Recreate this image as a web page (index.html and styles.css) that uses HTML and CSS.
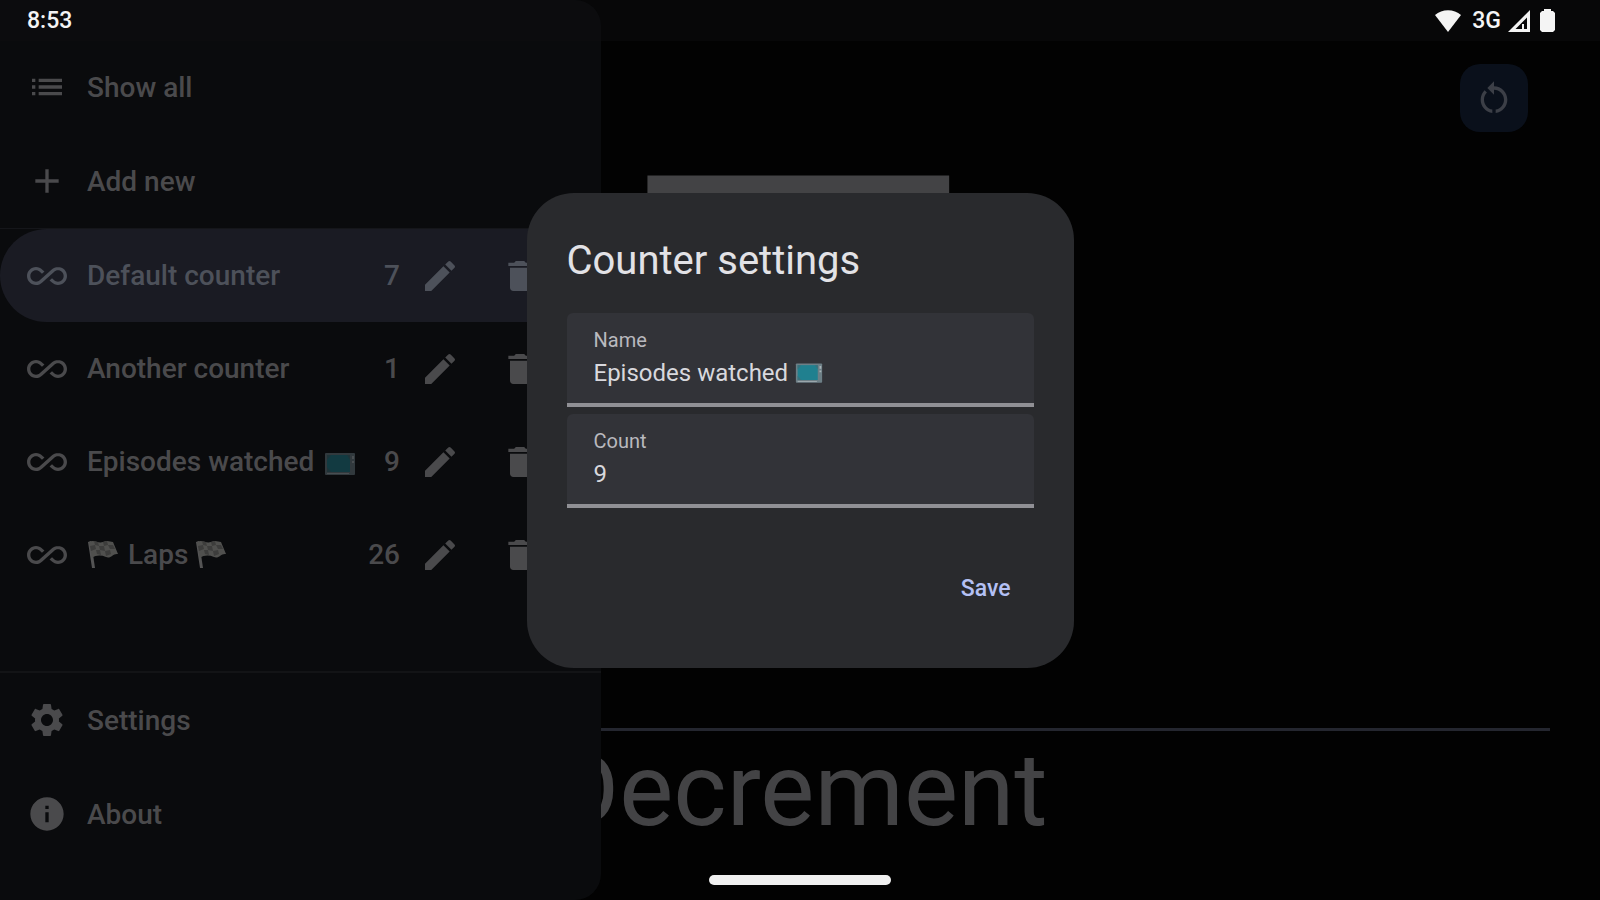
FILE: index.html
```html
<!DOCTYPE html>
<html lang="en">
<head>
<meta charset="UTF-8" />
<meta name="viewport" content="width=device-width, initial-scale=1" />
<title>Counter</title>
<link rel="stylesheet" href="styles.css">
</head>
<body>
  <!-- shared icons -->
  <svg class="sprite" aria-hidden="true">
    <symbol id="i-loop" viewBox="0 0 24 24"><path d="M18.6 6.62c-1.44 0-2.8.56-3.77 1.53L12 10.66 10.48 12h.01L7.8 14.39c-.64.64-1.49.99-2.4.99-1.87 0-3.39-1.51-3.39-3.38S3.53 8.62 5.4 8.62c.91 0 1.76.35 2.44 1.03l1.13 1 1.51-1.34L9.22 8.2C8.2 7.18 6.84 6.62 5.4 6.62 2.42 6.62 0 9.04 0 12s2.42 5.38 5.4 5.38c1.44 0 2.8-.56 3.77-1.53l2.83-2.5.01.01L13.52 12h-.01l2.69-2.39c.64-.64 1.49-.99 2.4-.99 1.87 0 3.39 1.51 3.39 3.38s-1.52 3.38-3.39 3.38c-.9 0-1.76-.35-2.44-1.03l-1.14-1.01-1.51 1.34 1.27 1.12c1.02 1.01 2.37 1.57 3.82 1.57 2.98 0 5.4-2.41 5.4-5.38s-2.42-5.37-5.4-5.37z"/></symbol>
    <symbol id="i-edit" viewBox="0 0 24 24"><path d="M3 17.25V21h3.75L17.81 9.94l-3.75-3.75L3 17.25zM20.71 7.04a1 1 0 0 0 0-1.41l-2.34-2.34a1 1 0 0 0-1.41 0l-1.83 1.83 3.75 3.75 1.83-1.83z"/></symbol>
    <symbol id="i-delete" viewBox="0 0 24 24"><path d="M6 19c0 1.1.9 2 2 2h8c1.1 0 2-.9 2-2V7H6v12zM19 4h-3.5l-1-1h-5l-1 1H5v2h14V4z"/></symbol>
    <symbol id="i-tv" viewBox="0 0 32 26">
      <rect x="1" y="2" width="30" height="22" rx="1" fill="#6d7f86"/>
      <rect x="3" y="4" width="23" height="17" fill="#20808f"/>
      <path d="M3 4h4L3 9zM26 4v5l-3-5zM3 21v-5l4 5z" fill="#3c6f7a"/>
      <path d="M3 22h22v1H3zM28 5h2v3h-2zM28 10h2v2h-2z" fill="#a9b4b8"/>
    </symbol>
    <symbol id="i-flag" viewBox="0 0 32 30">
      <path d="M1 2l3-1 4 27H5z" fill="#545454"/>
      <path d="M2 2c5-3 9 2 14 0s7 0 10 0l5 12c-5-1-7 5-12 3S9 15 5 18z" fill="#50504e"/>
      <path d="M7 1l4 1 1 4-4-1zM16 2l4-1 1 4-4 1zM3 6l5-1 1 4-5 2zM12 6l5 0 1 5-5-1zM21 5l5 0 2 4-5 0zM9 10l4 0 1 5-4-1zM18 11l5-1 1 4-5 2z" fill="#3d3d3c"/>
    </symbol>
  </svg>

  <header class="status-bar">
    <span>8:53</span>
    <div class="status-icons">
      <svg class="wifi" viewBox="0 0 26 22"><path d="M0 5C7-1.500 19-1.500 26 5L13 22z"/></svg>
      <span>3G</span>
      <svg class="signal" viewBox="0 0 22 22"><path fill-rule="evenodd" d="M22 0v22H0zM19 7.500L7.500 19H19z"/><path d="M14 14h2v5h-2z"/></svg>
      <svg class="battery" viewBox="0 0 15 23"><path d="M4 2V0h7v2h2l2 2v17l-2 2H2l-2-2V4l2-2z"/></svg>
    </div>
  </header>

  <main class="counter">
    <div class="count">7</div>
    <button class="decrement">Decrement</button>
    <button class="reset" aria-label="Reset">
      <svg class="icon" viewBox="0 0 24 24"><path d="M12 5V2L8 6l4 4V7c3.310 0 6 2.690 6 6 0 2.970-2.170 5.430-5 5.910v2.020c3.950-.49 7-3.850 7-7.930 0-4.420-3.580-8-8-8zM6 13c0-1.650.67-3.150 1.760-4.240L6.340 7.340C4.900 8.790 4 10.790 4 13c0 4.080 3.050 7.440 7 7.930v-2.020c-2.830-.48-5-2.940-5-5.910z"/></svg>
    </button>
  </main>

  <nav class="drawer">
    <a class="row" href="#">
      <svg class="icon" viewBox="0 0 24 24"><path d="M3 13h2v-2H3v2zm0 4h2v-2H3v2zm0-8h2V7H3v2zm4 4h14v-2H7v2zm0 4h14v-2H7v2zM7 7v2h14V7H7z"/></svg>
      <span class="label">Show all</span>
    </a>
    <a class="row" href="#">
      <svg class="icon" viewBox="0 0 24 24"><path d="M19 13h-6v6h-2v-6H5v-2h6V5h2v6h6v2z"/></svg>
      <span class="label">Add new</span>
    </a>

    <div class="counters">
      <div class="row selected">
        <svg class="icon"><use href="#i-loop"/></svg>
        <a class="label" href="#">Default counter</a>
        <span>7</span>
        <button aria-label="Edit"><svg class="icon"><use href="#i-edit"/></svg></button>
        <button aria-label="Delete"><svg class="icon"><use href="#i-delete"/></svg></button>
      </div>
      <div class="row">
        <svg class="icon"><use href="#i-loop"/></svg>
        <a class="label" href="#">Another counter</a>
        <span>1</span>
        <button aria-label="Edit"><svg class="icon"><use href="#i-edit"/></svg></button>
        <button aria-label="Delete"><svg class="icon"><use href="#i-delete"/></svg></button>
      </div>
      <div class="row">
        <svg class="icon"><use href="#i-loop"/></svg>
        <a class="label" href="#">Episodes watched <svg class="emoji tv"><use href="#i-tv"/></svg></a>
        <span>9</span>
        <button aria-label="Edit"><svg class="icon"><use href="#i-edit"/></svg></button>
        <button aria-label="Delete"><svg class="icon"><use href="#i-delete"/></svg></button>
      </div>
      <div class="row">
        <svg class="icon"><use href="#i-loop"/></svg>
        <a class="label" href="#"><svg class="emoji"><use href="#i-flag"/></svg> Laps <svg class="emoji"><use href="#i-flag"/></svg></a>
        <span>26</span>
        <button aria-label="Edit"><svg class="icon"><use href="#i-edit"/></svg></button>
        <button aria-label="Delete"><svg class="icon"><use href="#i-delete"/></svg></button>
      </div>
    </div>

    <div class="drawer-footer">
      <a class="row" href="#">
        <svg class="icon" viewBox="0 0 24 24"><path d="M19.140 12.940c.04-.3.060-.61.060-.94 0-.32-.02-.64-.07-.94l2.030-1.580c.18-.14.230-.41.120-.61l-1.920-3.320c-.12-.22-.37-.29-.59-.22l-2.390.96c-.5-.38-1.030-.7-1.620-.94l-.36-2.540c-.04-.24-.24-.41-.48-.41h-3.840c-.24 0-.43.170-.47.410l-.36 2.540c-.59.240-1.130.570-1.620.940l-2.390-.96c-.22-.08-.47 0-.59.220L2.740 8.870c-.12.210-.08.470.120.610l2.030 1.580c-.05.300-.09.630-.09.940s.02.640.070.940l-2.030 1.580c-.18.140-.23.410-.12.610l1.920 3.320c.12.220.370.290.590.220l2.390-.96c.5.380 1.030.700 1.620.940l.36 2.540c.05.240.240.410.480.410h3.840c.24 0 .44-.17.470-.41l.36-2.540c.59-.24 1.130-.56 1.620-.94l2.390.960c.22.080.470 0 .59-.22l1.920-3.320c.12-.22.070-.47-.12-.61l-2.010-1.580zM12 15.600c-1.980 0-3.600-1.620-3.600-3.600s1.620-3.600 3.600-3.600 3.600 1.620 3.600 3.600-1.620 3.600-3.600 3.600z"/></svg>
        <span class="label">Settings</span>
      </a>
      <a class="row" href="#">
        <svg class="icon" viewBox="0 0 24 24"><path d="M12 2C6.480 2 2 6.480 2 12s4.480 10 10 10 10-4.480 10-10S17.520 2 12 2zm1 15h-2v-6h2v6zm0-8h-2V7h2v2z"/></svg>
        <span class="label">About</span>
      </a>
    </div>
  </nav>

  <div class="overlay">
    <form class="dialog" role="dialog" aria-labelledby="dialogTitle">
      <h1 id="dialogTitle">Counter settings</h1>
      <div class="field">
        <label for="name">Name</label>
        <div class="value">
          <input id="name" type="text" value="Episodes watched">
          <svg class="emoji tv"><use href="#i-tv"/></svg>
        </div>
      </div>
      <div class="field">
        <label for="count">Count</label>
        <div class="value">
          <input id="count" type="text" inputmode="numeric" value="9">
        </div>
      </div>
      <button class="save" type="button">Save</button>
    </form>
  </div>

  <div class="nav-pill"></div>
</body>
</html>
```
FILE: styles.css
```css
* {
  box-sizing: border-box;
}

body {
  margin: 0;
  height: 100vh;
  display: flex;
  flex-direction: column;
  overflow: hidden;
  background: #020202;
  color: #434345;
  font-family: Roboto, sans-serif;
}

button {
  padding: 0;
  border: 0;
  background: none;
  color: inherit;
  font: inherit;
}

a {
  color: inherit;
  text-decoration: none;
}

svg {
  fill: currentColor;
}

.sprite {
  position: absolute;
  width: 0;
  height: 0;
}

.icon {
  display: block;
  width: 40px;
  height: 40px;
  flex-shrink: 0;
}

/* Status bar */
.status-bar {
  position: relative;
  z-index: 3;
  display: flex;
  justify-content: space-between;
  align-items: center;
  height: 41px;
  padding: 0 45px 0 27px;
  background: rgba(14, 15, 18, 0.4);
  color: #f4f4f4;
  font-size: 23px;
  font-weight: 500;
}

.status-icons {
  display: flex;
  align-items: center;
}

.wifi {
  width: 26px;
  height: 22px;
  margin-right: 11px;
}

.signal {
  width: 22px;
  height: 22px;
  margin: 0 10px 0 7px;
}

.battery {
  width: 15px;
  height: 23px;
}

/* Counter screen */
.counter {
  flex: 1;
  display: flex;
  flex-direction: column;
  min-height: 0;
  padding: 0 50px 40px;
}

.count {
  flex: 1;
  display: flex;
  justify-content: center;
  align-items: center;
  min-height: 0;
  padding-top: 44px;
  font-size: 628px;
  line-height: 1;
}

.decrement {
  height: 132px;
  padding-bottom: 12px;
  border-top: 3px solid #24262f;
  font-size: 102px;
  line-height: 116px;
}

.reset {
  position: absolute;
  top: 64px;
  right: 72px;
  padding: 14px;
  border-radius: 20px;
  background: #0a101b;
  color: #3c3f47;
}

/* Drawer */
.drawer {
  position: absolute;
  inset: 0 auto 0 0;
  z-index: 1;
  display: flex;
  flex-direction: column;
  width: 601px;
  padding: 40px 0 39px;
  border-radius: 0 26px 26px 0;
  background: #0a0b0d;
  color: #4a4a4c;
  font-size: 28px;
  font-weight: 500;
}

.row {
  display: flex;
  align-items: center;
  gap: 20px;
  height: 94px;
  padding: 0 61px 0 27px;
}

.label {
  flex: 1;
  white-space: nowrap;
}

.row button:last-child {
  margin-left: 20px;
}

.counters {
  flex: 1;
  border-top: 1px solid #15161a;
}

.counters .row {
  height: 93px;
}

.selected {
  border-radius: 47px;
  background: #1a1b23;
  color: #4d515a;
}

.emoji {
  width: 32px;
  height: 30px;
  margin-right: 2px;
  vertical-align: -6px;
}

.tv {
  height: 26px;
  margin: 0 0 0 3px;
  opacity: 0.4;
}

.drawer-footer {
  border-top: 2px solid #131416;
}

/* Dialog */
.overlay {
  position: absolute;
  inset: 0 0 39px;
  z-index: 2;
  display: flex;
  justify-content: center;
  align-items: center;
}

.dialog {
  display: flex;
  flex-direction: column;
  width: 547px;
  padding: 40px;
  border-radius: 47px;
  background: #292a2d;
  color: #e2e2e6;
}

.dialog h1 {
  margin: 0 0 24px;
  font-size: 40px;
  font-weight: 400;
  line-height: 56px;
}

.field {
  height: 94px;
  margin-bottom: 7px;
  padding: 14px 27px 0;
  border-bottom: 4px solid #909095;
  border-radius: 6px 6px 0 0;
  background: #323338;
}

.field label {
  display: block;
  color: #b9b9be;
  font-size: 20px;
  line-height: 26px;
}

.value {
  display: flex;
  align-items: center;
  gap: 4px;
}

.value input {
  field-sizing: content;
  height: 40px;
  padding: 0;
  border: 0;
  outline: 0;
  background: none;
  color: #d8d8dd;
  font: 24px/40px Roboto, sans-serif;
}

.value .tv {
  width: 28px;
  height: 24px;
  opacity: 1;
}

.save {
  align-self: flex-end;
  margin: 40px 0 6px;
  padding: 0 23px;
  color: #b4c0f4;
  font-size: 23px;
  font-weight: 500;
  line-height: 67px;
}

/* Gesture bar */
.nav-pill {
  position: absolute;
  bottom: 15px;
  left: 50%;
  z-index: 3;
  width: 182px;
  height: 10px;
  border-radius: 5px;
  background: #f0f0f0;
  transform: translateX(-50%);
}
```
